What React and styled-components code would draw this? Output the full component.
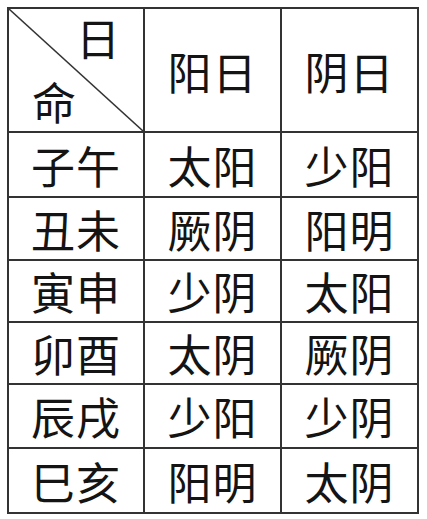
import React from "react";
import styled, { createGlobalStyle } from "styled-components";

const GlobalStyle = createGlobalStyle`
  html, body {
    margin: 0;
    padding: 0;
    background: #ffffff;
  }
  body {
    font-family: "Noto Sans CJK SC", "Noto Sans", sans-serif;
    color: #141414;
  }
`;

const Wrapper = styled.div`
  padding: 7px 0 0 7px;
`;

const Grid = styled.div`
  display: grid;
  grid-template-columns: 136px 137px 137px;
  grid-template-rows: 124px 65px 63px 62px 62px 64px 65px;
  width: max-content;
  border-top: 2px solid #333333;
  border-left: 2px solid #333333;
`;

const Cell = styled.div`
  box-sizing: border-box;
  display: flex;
  align-items: center;
  justify-content: center;
  border-right: 2px solid #333333;
  border-bottom: 2px solid #333333;
  font-size: 44px;
  line-height: 1;
  letter-spacing: 1px;
  padding-top: ${(p) => (p.$head ? "2px" : "0")};
`;

const CornerCell = styled.div`
  position: relative;
  box-sizing: border-box;
  display: flex;
  flex-direction: column;
  justify-content: space-between;
  padding: 6px 23px 8px 23px;
  border-right: 2px solid #333333;
  border-bottom: 2px solid #333333;
  font-size: 44px;
  line-height: 1;
`;

const CornerText = styled.span`
  align-self: ${(p) => (p.$end ? "flex-end" : "flex-start")};
`;

const Slash = styled.svg`
  position: absolute;
  inset: 0;
  width: 100%;
  height: 100%;
  pointer-events: none;
`;

const rows = [
  ["子午", "太阳", "少阳"],
  ["丑未", "厥阴", "阳明"],
  ["寅申", "少阴", "太阳"],
  ["卯酉", "太阴", "厥阴"],
  ["辰戌", "少阳", "少阴"],
  ["巳亥", "阳明", "太阴"],
];

function App() {
  return (
    <Wrapper>
      <GlobalStyle />
      <Grid>
        <CornerCell>
          <Slash viewBox="0 0 100 100" preserveAspectRatio="none">
            <line
              x1="0"
              y1="0"
              x2="100"
              y2="100"
              stroke="#333333"
              strokeWidth="1.5"
              vectorEffect="non-scaling-stroke"
            />
          </Slash>
          <CornerText $end>日</CornerText>
          <CornerText>命</CornerText>
        </CornerCell>
        <Cell $head>阳日</Cell>
        <Cell $head>阴日</Cell>
        {rows.map((r) =>
          r.map((text, i) => <Cell key={r[0] + i}>{text}</Cell>)
        )}
      </Grid>
    </Wrapper>
  );
}

export default App;
